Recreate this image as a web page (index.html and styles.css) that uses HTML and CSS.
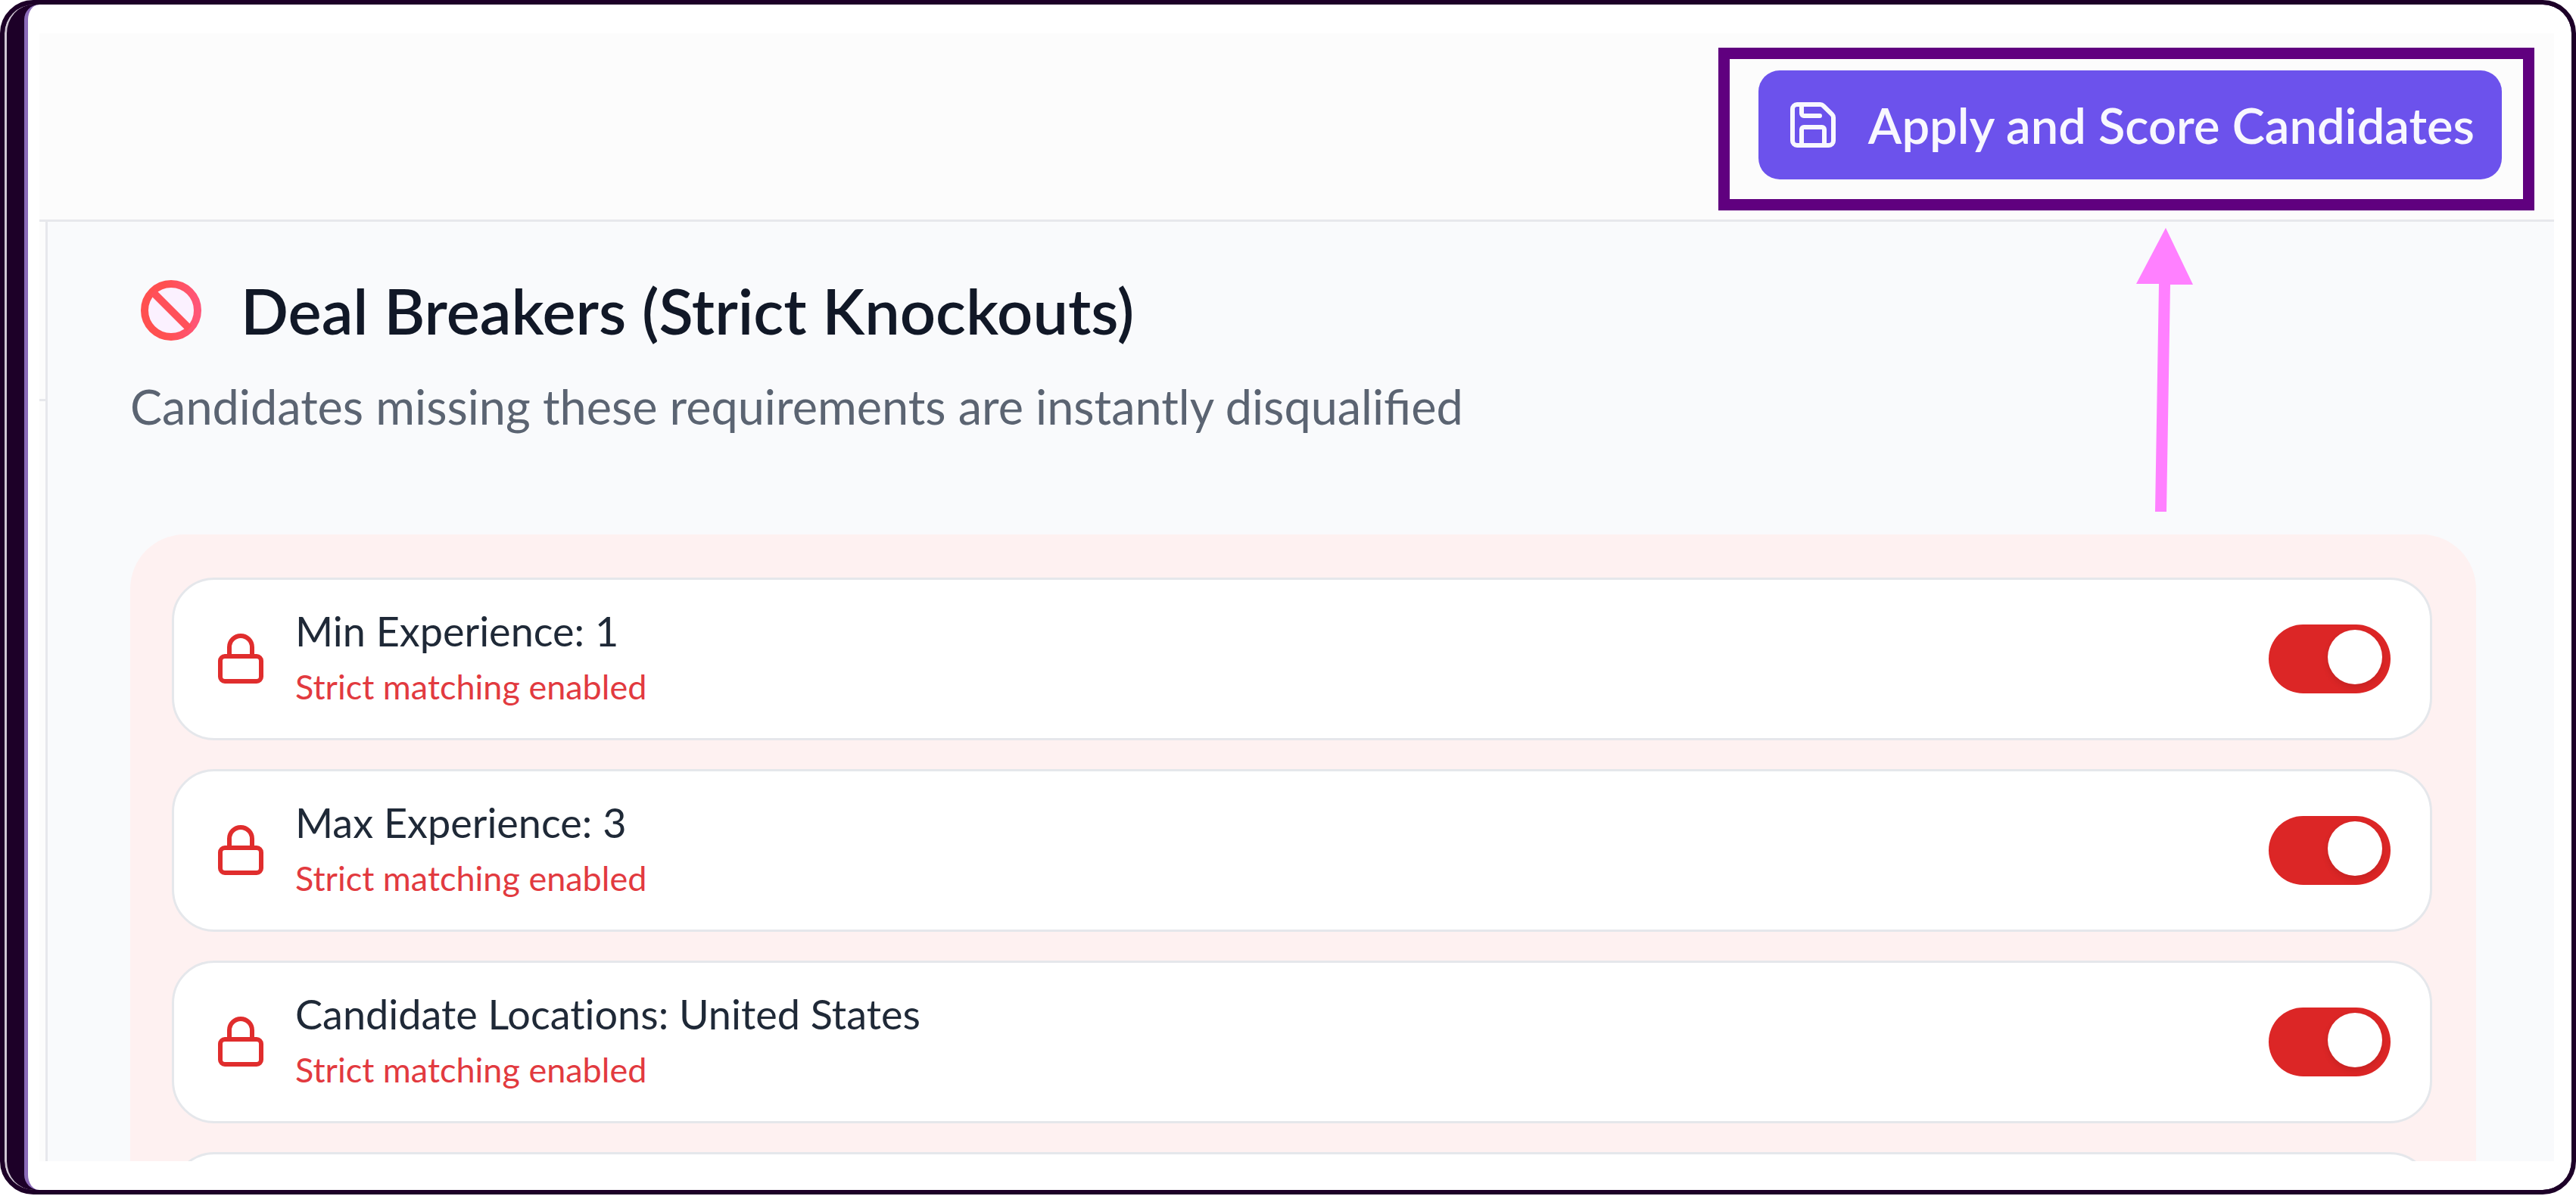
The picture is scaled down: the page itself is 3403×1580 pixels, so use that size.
FILE: index.html
```html
<!DOCTYPE html>
<html lang="en">
<head>
<meta charset="utf-8">
<title>Deal Breakers (Strict Knockouts)</title>
<link rel="stylesheet" href="styles.css">
</head>
<body>
<svg class="sprite" aria-hidden="true">
  <symbol id="lock" viewBox="0 0 24 24">
    <rect x="3" y="11" width="18" height="11" rx="2"/>
    <path d="M7 11V7a5 5 0 0 1 10 0v4"/>
  </symbol>
</svg>
<div class="frame">
  <div class="spine">
    <div class="sheet">
      <div class="app">
        <header class="topbar">
          <div class="callout">
            <button class="apply" type="button">
              <svg class="icon" viewBox="0 0 24 24" aria-hidden="true">
                <path d="M15.2 3a2 2 0 0 1 1.4.6l3.8 3.8a2 2 0 0 1 .6 1.4V19a2 2 0 0 1-2 2H5a2 2 0 0 1-2-2V5a2 2 0 0 1 2-2z"/>
                <path d="M17 21v-7a1 1 0 0 0-1-1H8a1 1 0 0 0-1 1v7"/>
                <path d="M7 3v4a1 1 0 0 0 1 1h7"/>
              </svg>
              <span>Apply and Score Candidates</span>
            </button>
            <svg class="arrow" viewBox="0 0 75 376" aria-hidden="true">
              <path d="M39 0 75 75H45L40 375H25L30 74H0z"/>
            </svg>
          </div>
        </header>
        <div class="body">
          <div class="rail"><div class="rail-block"></div></div>
          <main class="content">
            <h1 class="title">
              <svg class="ban" viewBox="0 0 80 80" aria-hidden="true">
                <defs>
                  <linearGradient id="ring" x1="0" y1="0" x2="1" y2="0">
                    <stop offset="0.4" stop-color="#ff5050"/>
                    <stop offset="1" stop-color="#ff5578"/>
                  </linearGradient>
                </defs>
                <circle cx="40" cy="40" r="35" fill="#fbf1ff" stroke="url(#ring)" stroke-width="10"/>
                <path d="M16 16 64 64" stroke="#ff5059" stroke-width="10"/>
              </svg>
              <span>Deal Breakers (Strict Knockouts)</span>
            </h1>
            <p class="subtitle">Candidates missing these requirements are instantly disqualified</p>
            <ul class="rules">
              <li class="rule">
                <svg class="icon lock" aria-hidden="true"><use href="#lock"/></svg>
                <label class="rule-text" for="r1"><span class="rule-name">Min Experience: 1</span><span class="rule-note">Strict matching enabled</span></label>
                <input class="switch" id="r1" type="checkbox" role="switch" checked>
              </li>
              <li class="rule">
                <svg class="icon lock" aria-hidden="true"><use href="#lock"/></svg>
                <label class="rule-text" for="r2"><span class="rule-name">Max Experience: 3</span><span class="rule-note">Strict matching enabled</span></label>
                <input class="switch" id="r2" type="checkbox" role="switch" checked>
              </li>
              <li class="rule">
                <svg class="icon lock" aria-hidden="true"><use href="#lock"/></svg>
                <label class="rule-text" for="r3"><span class="rule-name">Candidate Locations: United States</span><span class="rule-note">Strict matching enabled</span></label>
                <input class="switch" id="r3" type="checkbox" role="switch" checked>
              </li>
              <li class="rule rule-empty"></li>
            </ul>
          </main>
        </div>
      </div>
    </div>
  </div>
</div>
</body>
</html>
```
FILE: styles.css
```css
*, *::before { box-sizing: border-box; }

body {
  margin: 0;
  background: #fff;
  font-family: Lato, "Liberation Sans", sans-serif;
}

.sprite { position: absolute; width: 0; height: 0; }

/* Device-like frame */
.frame {
  height: calc(100vh - 2px);
  border: 6px solid #1d0028;
  border-radius: 44px;
  background: #1d0028;
  overflow: hidden;
}
.spine {
  height: 100%;
  padding-left: 23px;
  border-left: 3px solid #cfc6d3;
  border-radius: 38px;
}
.sheet {
  height: 100%;
  padding: 38px 23px 38px 15px;
  border-left: 5px solid #8b6bb8;
  border-radius: 20px 38px 38px 20px;
  background: #fff;
}
.app {
  display: flex;
  flex-direction: column;
  height: 100%;
  overflow: hidden;
  background: #fcfcfc;
}

/* Top bar */
.topbar {
  display: flex;
  justify-content: flex-end;
  padding: 19px 26px 12px;
  border-bottom: 3px solid #e7e8ec;
}
.callout {
  position: relative;
  z-index: 1;
  padding: 15px 28px 26px 38px;
  border: 15px solid #60007f;
}
.apply {
  display: flex;
  align-items: center;
  gap: 37px;
  height: 144px;
  padding: 0 36px;
  border: 0;
  border-radius: 28px;
  background: #6c52ec;
  color: #f8f7fe;
  font: 600 65px/80px Lato, "Liberation Sans", sans-serif;
  white-space: nowrap;
}
.icon {
  flex: none;
  width: 72px;
  height: 72px;
  fill: none;
  stroke: currentColor;
  stroke-width: 2;
  stroke-linecap: round;
  stroke-linejoin: round;
}
.arrow {
  position: absolute;
  top: 223px;
  right: 436px;
  width: 75px;
  height: 376px;
  fill: #ff80ff;
}

/* Main area */
.body {
  display: flex;
  flex: 1;
  min-height: 0;
}
.rail {
  flex: none;
  width: 11px;
  border-right: 3px solid #e7e8ec;
}
.rail-block {
  height: 237px;
  border-bottom: 3px solid #e7e8ec;
}
.content {
  flex: 1;
  min-width: 0;
  padding: 67px 103px 0 109px;
  background: #f9fafc;
}
.title {
  display: flex;
  align-items: center;
  gap: 52px;
  margin: 0;
  padding-left: 14px;
  color: #111827;
  font-size: 83px;
  font-weight: 600;
  line-height: 100px;
}
.ban { flex: none; width: 80px; height: 80px; }
.subtitle {
  margin: 37px 0 129px;
  color: #5b6472;
  font-size: 63px;
  line-height: 80px;
}

/* Rules */
.rules {
  display: flex;
  flex-direction: column;
  gap: 38px;
  margin: 0;
  padding: 57px 58px 57px 55px;
  border-radius: 72px;
  background: #fef1f1;
  font-variant-ligatures: no-common-ligatures;
  list-style: none;
}
.rule {
  display: flex;
  align-items: center;
  gap: 36px;
  padding: 31px 52px 32px;
  border: 3px solid #e5e7eb;
  border-radius: 56px;
  background: #fff;
}
.rule-empty { min-height: 215px; }
.lock { color: #e02d2d; }
.rule-text {
  display: flex;
  flex: 1;
  flex-direction: column;
}
.rule-name {
  color: #1f2937;
  font-size: 54px;
  line-height: 74px;
}
.rule-note {
  color: #e23a3f;
  font-size: 45px;
  line-height: 72px;
}
.switch {
  display: flex;
  flex: none;
  align-items: flex-start;
  justify-content: flex-end;
  width: 161px;
  height: 91px;
  margin: 0;
  padding: 7px 11px;
  border-radius: 46px;
  background: #dc2626;
  appearance: none;
}
.switch::before {
  width: 72px;
  height: 72px;
  border-radius: 50%;
  background: #fff;
  box-shadow: 0 4px 8px #0000001a;
  content: "";
}
.switch:not(:checked) {
  justify-content: flex-start;
  background: #d1d5db;
}
```
